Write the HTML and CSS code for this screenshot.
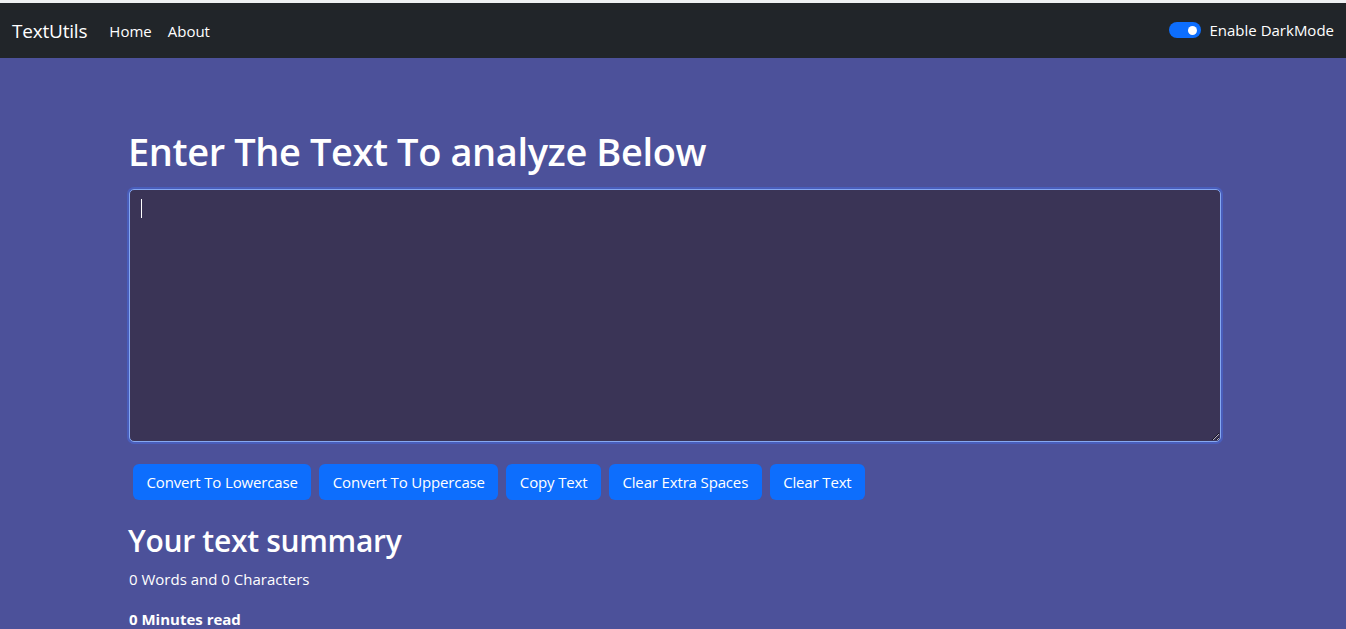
FILE: index.html
```html
<!DOCTYPE html>
<html lang="en">
<head>
<meta charset="utf-8">
<title>TextUtils</title>
<link rel="stylesheet" href="styles.css">
</head>
<body>
<div class="topstrip"></div>
<nav class="navbar">
  <a class="brand" href="#">TextUtils</a>
  <ul class="nav-links">
    <li><a href="#">Home</a></li>
    <li><a href="#">About</a></li>
  </ul>
  <label class="switch">
    <span class="toggle"><span class="knob"></span></span>
    <span class="switch-label">Enable DarkMode</span>
  </label>
</nav>
<main class="container">
  <h1 class="title">Enter The Text To analyze Below</h1>
  <div class="text-wrap">
    <textarea class="textbox"></textarea>
    <span class="caret"></span>
  </div>
  <div class="buttons">
    <button class="btn">Convert To Lowercase</button>
    <button class="btn">Convert To Uppercase</button>
    <button class="btn">Copy Text</button>
    <button class="btn">Clear Extra Spaces</button>
    <button class="btn">Clear Text</button>
  </div>
  <h2 class="summary">Your text summary</h2>
  <p class="stat">0 Words and 0 Characters</p>
  <p class="stat bold">0 Minutes read</p>
</main>
</body>
</html>
```
FILE: styles.css
```css
* { box-sizing: border-box; }
html, body { margin: 0; padding: 0; }
body {
  background: #4c519a;
  font-family: "Open Sans", "Noto Sans", sans-serif;
  color: #fff;
  height: 629px;
  overflow: hidden;
}
.topstrip { height: 3px; background: #eef0f2; }
.navbar {
  height: 55px;
  background: #212529;
  display: flex;
  align-items: center;
  padding: 0 12px;
}
.brand {
  color: #fff;
  text-decoration: none;
  font-size: 19px;
  margin-right: 22px;
  letter-spacing: -0.2px;
}
.nav-links {
  list-style: none;
  margin: 0;
  padding: 0;
  display: flex;
  gap: 16px;
  flex: 1;
}
.nav-links a {
  color: #fff;
  text-decoration: none;
  font-size: 15px;
}
.switch {
  display: flex;
  align-items: center;
  gap: 9px;
  font-size: 15px;
  margin-top: -1px;
}
.toggle {
  width: 32px;
  height: 16px;
  border-radius: 8px;
  background: #0d6efd;
  display: flex;
  align-items: center;
  justify-content: flex-end;
  padding-right: 4px;
}
.knob {
  width: 9px;
  height: 9px;
  border-radius: 50%;
  background: #fff;
}
.container {
  width: 1092px;
  margin-left: 129px;
}
.title {
  font-size: 38px;
  font-weight: 600;
  line-height: 48px;
  margin: 69px 0 14px -1px;
  letter-spacing: -0.4px;
}
.text-wrap { position: relative; }
.textbox {
  display: block;
  width: 1092px;
  height: 253px;
  background: #3a3456;
  border: 1px solid #86a8f0;
  border-radius: 5px;
  box-shadow: 0 0 0 2px rgba(70, 110, 230, 0.45);
  outline: none;
  resize: vertical;
  color: #fff;
  font: inherit;
  padding: 6px 12px;
}
.caret {
  position: absolute;
  left: 12px;
  top: 10px;
  width: 1px;
  height: 19px;
  background: #fff;
}
.buttons {
  display: flex;
  gap: 8px;
  margin: 22px 0 0 4px;
}
.btn {
  height: 36px;
  background: #0d6efd;
  color: #fff;
  border: none;
  border-radius: 6px;
  font-family: inherit;
  font-size: 15px;
  padding: 0 13.5px;
  letter-spacing: -0.15px;
}
.summary {
  font-size: 30px;
  font-weight: 600;
  line-height: 38px;
  margin: 22px 0 0 -1px;
  letter-spacing: -0.3px;
}
.stat {
  font-size: 15px;
  margin: 8px 0 0;
  line-height: 22px;
}
.stat.bold { font-weight: 700; margin-top: 18px; }
```
